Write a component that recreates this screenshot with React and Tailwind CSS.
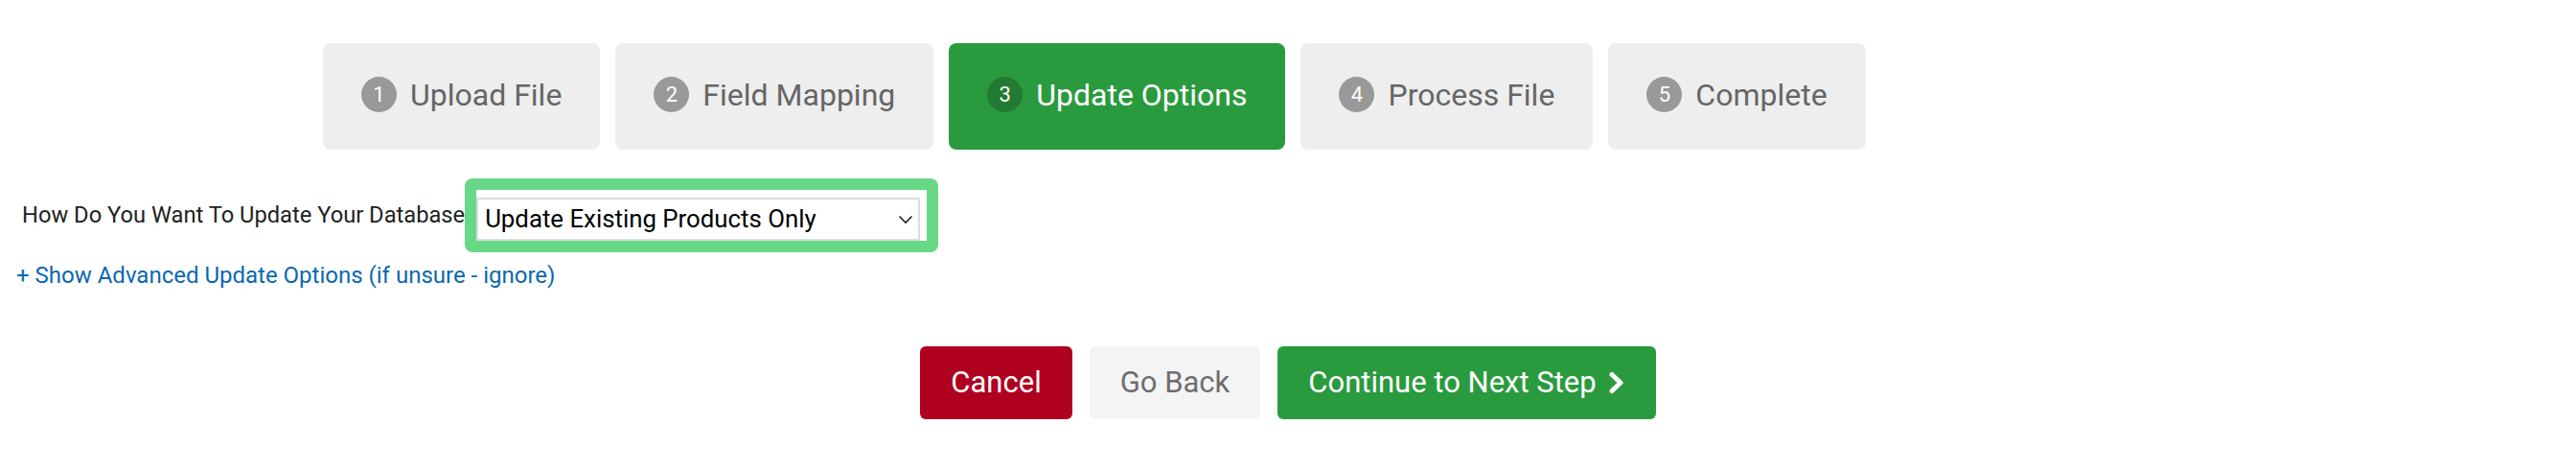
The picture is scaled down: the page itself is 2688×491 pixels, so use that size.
import React from 'react';

const steps = [
  { num: 1, label: 'Upload File' },
  { num: 2, label: 'Field Mapping' },
  { num: 3, label: 'Update Options', active: true },
  { num: 4, label: 'Process File' },
  { num: 5, label: 'Complete' },
];

const Step = ({ num, label, active }) => (
  <div
    className={`h-[111px] rounded-[8px] px-10 pb-1 flex items-center gap-[14px] ${
      active ? 'bg-[#2a9a3e] text-white' : 'bg-[#eeeeee] text-[#666666]'
    }`}
  >
    <span
      className={`w-[37px] h-[37px] rounded-full flex items-center justify-center text-[22px] text-white ${
        active ? 'bg-[#237a33]' : 'bg-[#999999]'
      }`}
    >
      {num}
    </span>
    <span className="text-[32px]">{label}</span>
  </div>
);

const App = () => {
  return (
    <div className="w-[2688px] h-[491px] bg-white font-['Roboto',sans-serif]">
      {/* Wizard steps */}
      <div className="flex gap-4 pt-[45px] pl-[337px]">
        {steps.map((s) => (
          <Step key={s.num} {...s} />
        ))}
      </div>

      {/* Update mode */}
      <div className="flex items-center mt-[30px] pl-[23px]">
        <label className="text-[23.7px] text-[#222222]">How Do You Want To Update Your Database</label>
        <div className="border-[12px] border-[#68d887] rounded-[8px] bg-white pt-2 pr-[7px]">
          <div className="w-[463px] h-[45px] border-2 border-[#dddddd] bg-white flex items-center justify-between pl-[7px] pr-[5px] text-[25.8px] text-black">
            <span>Update Existing Products Only</span>
            <svg width="16" height="10" viewBox="0 0 16 10" fill="none">
              <path d="M1.5 1.5L8 8L14.5 1.5" stroke="#222" strokeWidth="1.6" />
            </svg>
          </div>
        </div>
      </div>

      <div className="mt-[6px] pl-[17px]">
        <a className="text-[24px] text-[#0b67b2] cursor-pointer">+ Show Advanced Update Options (if unsure - ignore)</a>
      </div>

      {/* Actions */}
      <div className="flex justify-center gap-[18px] mt-[56px]">
        <button className="h-[76px] px-8 rounded-[6px] bg-[#b00020] text-white text-[31px]">Cancel</button>
        <button className="h-[76px] px-8 rounded-[6px] bg-[#f4f4f4] text-[#6e6e6e] text-[31px]">Go Back</button>
        <button className="h-[76px] px-8 rounded-[6px] bg-[#2a9a3e] text-white text-[31px] flex items-center gap-[12px]">
          Continue to Next Step
          <svg width="18" height="24" viewBox="0 0 18 24" fill="none">
            <path d="M4 3.5L13 12L4 20.5" stroke="white" strokeWidth="5" strokeLinecap="round" strokeLinejoin="round" />
          </svg>
        </button>
      </div>
    </div>
  );
};

export default App;
